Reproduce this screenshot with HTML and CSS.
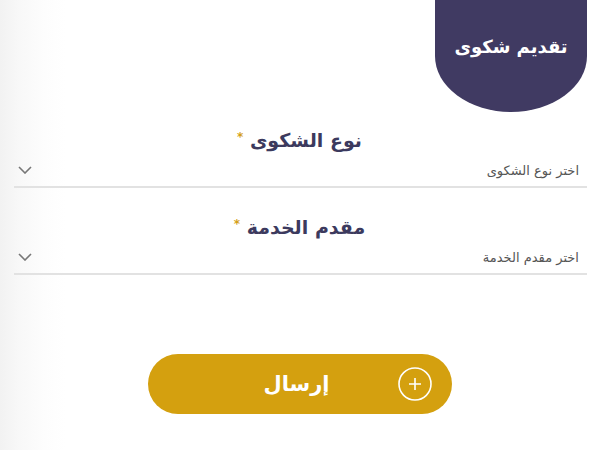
FILE: index.html
```html
<!DOCTYPE html>
<html lang="ar" dir="rtl">
<head>
<meta charset="utf-8">
<link rel="stylesheet" href="styles.css">
</head>
<body>
<div class="page">
  <div class="header">
    <div class="tab">تقديم شكوى</div>
  </div>
  <div class="field">
    <div class="label">نوع الشكوى <span class="star">*</span></div>
    <div class="select">
      <span class="placeholder">اختر نوع الشكوى</span>
      <svg class="chev" width="14" height="8" viewBox="0 0 14 8"><path d="M1 1l6 6 6-6" fill="none" stroke="#777" stroke-width="1.6"/></svg>
    </div>
  </div>
  <div class="field">
    <div class="label">مقدم الخدمة <span class="star">*</span></div>
    <div class="select">
      <span class="placeholder">اختر مقدم الخدمة</span>
      <svg class="chev" width="14" height="8" viewBox="0 0 14 8"><path d="M1 1l6 6 6-6" fill="none" stroke="#777" stroke-width="1.6"/></svg>
    </div>
  </div>
  <div class="actions">
    <button class="submit">
      <svg class="plus" width="34" height="34" viewBox="0 0 34 34"><circle cx="17" cy="17" r="16" fill="none" stroke="#fff" stroke-width="1.6"/><path d="M17 11v12M11 17h12" stroke="#fff" stroke-width="1.6"/></svg>
      <span class="btext">إرسال</span>
    </button>
  </div>
</div>
</body>
</html>
```
FILE: styles.css
```css
html, body {
  margin: 0;
  padding: 0;
}
body {
  width: 600px;
  height: 450px;
  overflow: hidden;
  font-family: "DejaVu Sans", sans-serif;
  background: linear-gradient(to right, #f2f2f2 0px, #f8f8f8 20px, #fdfdfd 45px, #ffffff 65px);
}
.page {
  padding: 0 13px 0 12px;
}
.header {
  display: flex;
  justify-content: flex-start;
  height: 112px;
}
.tab {
  width: 152px;
  height: 112px;
  background: #403a62;
  color: #fff;
  font-weight: bold;
  font-size: 18px;
  display: flex;
  align-items: center;
  justify-content: center;
  padding-bottom: 20px;
  box-sizing: border-box;
  border-bottom-left-radius: 76px 56px;
  border-bottom-right-radius: 76px 56px;
}
.field {
  margin-top: 11px;
}
.field + .field {
  margin-top: 22px;
}
.label {
  text-align: center;
  font-size: 19px;
  font-weight: bold;
  color: #3c3a5e;
  line-height: 28px;
}
.star {
  color: #d4a017;
  font-size: 12px;
  vertical-align: 6px;
}
.select {
  display: flex;
  align-items: center;
  justify-content: space-between;
  height: 32px;
  border-bottom: 2px solid #e2e2e2;
  padding: 0 8px 0 4px;
  margin-left: 2px;
}
.placeholder {
  font-size: 13px;
  color: #555;
}
.chev {
  display: block;
}
.actions {
  display: flex;
  justify-content: center;
  margin-top: 79px;
}
.submit {
  width: 304px;
  height: 60px;
  border: none;
  border-radius: 30px;
  background: #d4a00f;
  display: flex;
  align-items: center;
  padding: 0 20px 0 0;
  font-family: inherit;
  cursor: pointer;
}
.plus {
  display: block;
}
.btext {
  color: #fff;
  font-size: 21px;
  font-weight: bold;
  margin-right: 68px;
}
```
